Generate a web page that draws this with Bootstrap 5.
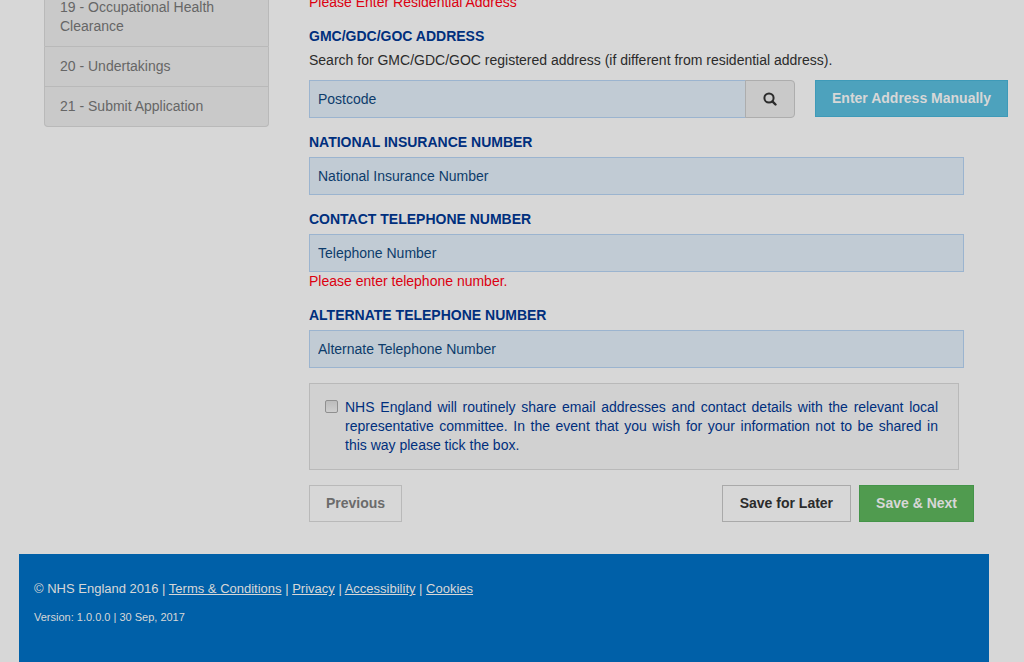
<!DOCTYPE html>
<html lang="en">
<head>
<meta charset="utf-8">
<meta name="viewport" content="width=device-width, initial-scale=1">
<title>NHS England - Personal Details</title>
<link href="https://cdn.jsdelivr.net/npm/bootstrap@5.3.0/dist/css/bootstrap.min.css" rel="stylesheet">
<style>
  body { background: #d7d7d7; color: #2b2b2b; font-family: "Liberation Sans", Arial, sans-serif; font-size: 14px; line-height: 19px; overflow-x: hidden; }
  .page { padding: 0 35px 0 19px; overflow: hidden; }
  .content { margin-top: -13px; padding: 0 15px 32px 25px; gap: 40px; }
  .steps { flex: 0 0 225px; }
  .steps .list-group { border-radius: 4px; --bs-list-group-border-radius: 4px; }
  .steps .list-group-item { background: #c9c9c9; border-color: #b9b9b9; color: #666; padding: 10px 15px; line-height: 19px; }
  .details { padding-top: 6px; min-width: 0; }
  .field { margin: 0 10px 15px 0; }
  .field label { display: block; color: #002f7d; font-weight: 700; margin-bottom: 5px; }
  .hint { margin-bottom: 10px; }
  .problem { color: #dc0010; margin: 0; }
  .form-control { height: 38px; border-radius: 0; border-color: #9bb4cf; background: #c1cbd4; color: #0d3c6b; font-size: 14px; line-height: 20px; padding: 8px; }
  .form-control::placeholder { color: #0d3c6b; opacity: 1; }
  .lookup { gap: 20px; margin-right: -44px; }
  .find { width: 50px; padding: 0 0 2px; background: #c9c9c9; border-color: #adadad; color: #2b2b2b; border-radius: 0 4px 4px 0; }
  .action { height: 37px; padding: 0 16px 2px; border-radius: 0; font-size: 14px; font-weight: 700; line-height: 20px; white-space: nowrap; }
  .action-info { background: #4da2bd; border-color: #3e9ab8; color: #d7d7d7; }
  .action-back { border-color: #b9b9b9; color: #6b6b6b; }
  .action-later { border-color: #a9a9a9; color: #2b2b2b; padding: 0 17px 2px; }
  .action-next { background: #509b4f; border-color: #449449; color: #d7d7d7; }
  .consent { background: #d1d1d1; border: 1px solid #b9b9b9; padding: 14px 20px 14px 15px; margin: 0 15px 15px 0; gap: 7px; color: #002f7d; text-align: justify; }
  .consent input { appearance: none; flex: 0 0 13px; width: 13px; height: 13px; margin: 2px 0 0; border: 1px solid #8f8f8f; border-radius: 2px; background: linear-gradient(#bcbcbc, #cecece); }
  .consent input:checked { background: #002f7d; }
  .site-footer { background: #0060a8; color: #d7d7d7; padding: 25px 15px 35px; font-size: 13px; }
  .site-footer a { color: inherit; }
  .site-footer p { margin-bottom: 10px; }
  .version { font-size: 11px; }
</style>
</head>
<body>
<div class="page d-flex flex-column min-vh-100">
  <div class="content d-flex">
    <nav class="steps" aria-label="Application steps">
      <div class="list-group">
        <a href="#" class="list-group-item">19 - Occupational Health Clearance</a>
        <a href="#" class="list-group-item">20 - Undertakings</a>
        <a href="#" class="list-group-item">21 - Submit Application</a>
      </div>
    </nav>
    <main class="details flex-grow-1">
      <form>
        <div class="field"><p class="problem">Please Enter Residential Address</p></div>
        <div class="field">
          <label for="postcode">GMC/GDC/GOC ADDRESS</label>
          <p class="hint">Search for GMC/GDC/GOC registered address (if different from residential address).</p>
          <div class="lookup d-flex">
            <div class="input-group flex-nowrap">
              <input id="postcode" type="text" class="form-control" placeholder="Postcode">
              <button type="button" class="btn find" aria-label="Search">
                <svg width="14" height="14" viewBox="0 0 14 14" fill="none" stroke="currentColor" aria-hidden="true"><circle cx="6" cy="6" r="4.6" stroke-width="2"/><path d="M9.4 9.4 12.5 12.5" stroke-width="2.4" stroke-linecap="round"/></svg>
              </button>
            </div>
            <button type="button" class="btn action action-info">Enter Address Manually</button>
          </div>
        </div>
        <div class="field">
          <label for="ni">NATIONAL INSURANCE NUMBER</label>
          <input id="ni" type="text" class="form-control" placeholder="National Insurance Number">
        </div>
        <div class="field">
          <label for="phone">CONTACT TELEPHONE NUMBER</label>
          <input id="phone" type="tel" class="form-control" placeholder="Telephone Number">
          <p class="problem">Please enter telephone number.</p>
        </div>
        <div class="field">
          <label for="altphone">ALTERNATE TELEPHONE NUMBER</label>
          <input id="altphone" type="tel" class="form-control" placeholder="Alternate Telephone Number">
        </div>
        <div class="consent d-flex align-items-start">
          <input id="share" type="checkbox">
          <label for="share">NHS England will routinely share email addresses and contact details with the relevant local representative committee. In the event that you wish for your information not to be shared in this way please tick the box.</label>
        </div>
        <div class="d-flex">
          <button type="button" class="btn action action-back me-auto">Previous</button>
          <button type="button" class="btn action action-later me-2">Save for Later</button>
          <button type="submit" class="btn action action-next">Save &amp; Next</button>
        </div>
      </form>
    </main>
  </div>
  <footer class="site-footer flex-grow-1">
    <p>© NHS England 2016 | <a href="#">Terms &amp; Conditions</a> | <a href="#">Privacy</a> | <a href="#">Accessibility</a> | <a href="#">Cookies</a></p>
    <div class="version">Version: 1.0.0.0 | 30 Sep, 2017</div>
  </footer>
</div>
<script src="https://cdn.jsdelivr.net/npm/bootstrap@5.3.0/dist/js/bootstrap.bundle.min.js"></script>
</body>
</html>
